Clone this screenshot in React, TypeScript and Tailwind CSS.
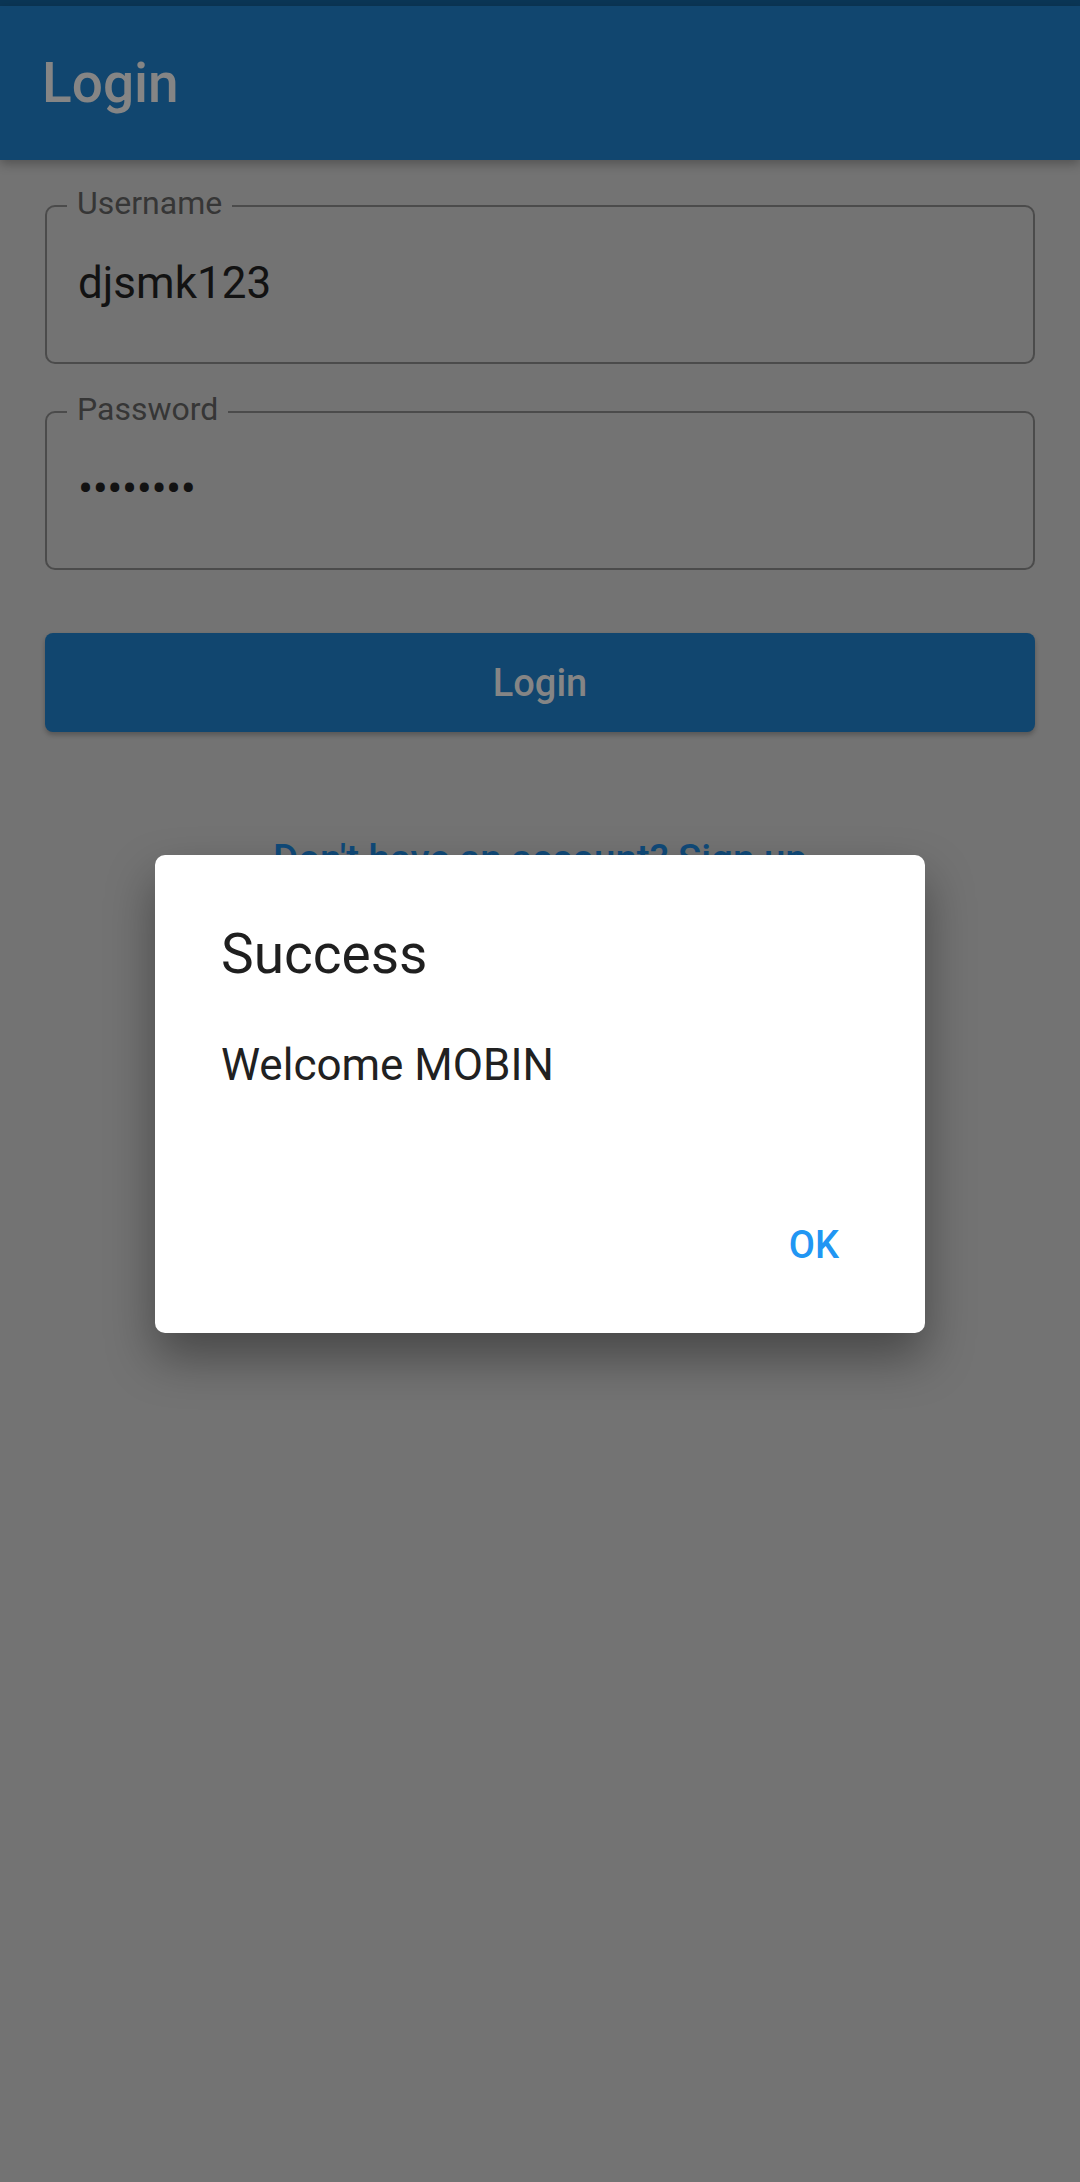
import React from "react";

export default function App() {
  return (
    <div
      className="relative w-[1080px] h-[2182px] bg-[#737373] overflow-hidden"
      style={{ fontFamily: "Roboto, 'Noto Sans', sans-serif" }}
    >
      <div className="h-[6px] bg-[#0b3656]" />
      <header className="relative z-10 h-[154px] bg-[#11466f] flex items-center px-[42px] shadow-[0_4px_10px_rgba(0,0,0,0.28)]">
        <h1 className="text-[55px] leading-none font-medium text-[#858585]">Login</h1>
      </header>

      <main className="px-[45px] pt-[45px] flex flex-col">
        <div className="relative h-[159px] rounded-[10px] border-2 border-[#4b4b4b]">
          <span className="absolute left-[20px] top-[-20px] px-[10px] bg-[#737373] text-[32px] leading-none text-[#363636]">
            Username
          </span>
          <div className="pt-[54px] pl-[31px] text-[44px] leading-none text-[#121212]">djsmk123</div>
        </div>

        <div className="relative mt-[47px] h-[159px] rounded-[10px] border-2 border-[#4b4b4b]">
          <span className="absolute left-[20px] top-[-20px] px-[10px] bg-[#737373] text-[32px] leading-none text-[#363636]">
            Password
          </span>
          <div className="pt-[53px] pl-[31px] text-[45px] leading-none text-[#121212] tracking-[-0.5px]">••••••••</div>
        </div>

        <button className="mt-[63px] h-[99px] rounded-[8px] bg-[#11466f] shadow-[0_3px_5px_rgba(0,0,0,0.25)] flex items-center justify-center">
          <span className="text-[38px] leading-none font-medium text-[#858585]">Login</span>
        </button>

        <div className="mt-[108px] text-center text-[38.5px] leading-none font-medium text-[#104a79]">
          Don't have an account? Sign up
        </div>
      </main>

      <div
        role="dialog"
        className="absolute left-[155px] top-[855px] w-[770px] h-[478px] bg-white rounded-[10px] shadow-[0_24px_48px_rgba(0,0,0,0.38)] flex flex-col"
      >
        <div className="pt-[72px] px-[66px]">
          <h2 className="text-[55px] leading-none text-[#1f1f1f]">Success</h2>
          <p className="mt-[61px] text-[44px] leading-none text-[#212121]">Welcome MOBIN</p>
        </div>
        <div className="mt-auto pb-[69px] pr-[86px] flex justify-end">
          <span className="text-[38px] leading-none font-medium text-[#2196f3]">OK</span>
        </div>
      </div>
    </div>
  );
}
